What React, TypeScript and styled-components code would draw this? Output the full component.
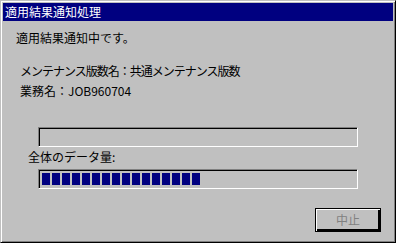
import React from "react";
import styled, { createGlobalStyle } from "styled-components";

const Global = createGlobalStyle`
  html, body { margin: 0; padding: 0; background: #c0c0c0; }
  body { font-family: "Noto Sans CJK JP", "Liberation Sans", sans-serif; }
`;

const Win = styled.div`
  width: 396px;
  height: 243px;
  box-sizing: border-box;
  background: #c0c0c0;
  border: 1px solid;
  border-color: #c0c0c0 #000 #000 #c0c0c0;
  box-shadow: inset 1px 1px #fff, inset -1px -1px #808080;
  padding: 2px;
  display: flex;
  flex-direction: column;
  font-family: "Noto Sans CJK JP", "Liberation Sans", sans-serif;
  font-size: 12px;
  color: #000;
`;

const TitleBar = styled.div`
  height: 18px;
  background: #000080;
  color: #fff;
  font-size: 12px;
  line-height: 18px;
  padding-left: 2px;
  white-space: nowrap;
`;

const Body = styled.div`
  display: flex;
  flex-direction: column;
  flex: 1;
`;

const Line = styled.div<{ $x: number; $top: number; $spacing?: number }>`
  margin-left: ${(p) => p.$x}px;
  margin-top: ${(p) => p.$top}px;
  height: 14px;
  line-height: 14px;
  white-space: nowrap;
  letter-spacing: ${(p) => p.$spacing ?? 0}px;
`;

const Field = styled.div<{ $top: number }>`
  margin-left: 35px;
  margin-top: ${(p) => p.$top}px;
  width: 320px;
  height: 20px;
  box-sizing: border-box;
  border: 1px solid;
  border-color: #808080 #fff #fff #808080;
  box-shadow: inset 1px 1px #000, inset -1px -1px #c0c0c0;
  padding: 3px 3px;
  display: flex;
  gap: 2px;
`;

const Block = styled.div`
  width: 8px;
  height: 12px;
  background: #000080;
`;

const Footer = styled.div`
  display: flex;
  justify-content: flex-end;
  margin-top: 19px;
  padding-right: 12px;
`;

const Button = styled.button`
  width: 66px;
  height: 24px;
  box-sizing: border-box;
  background: #c0c0c0;
  border: 1px solid #000;
  box-shadow: inset 1px 1px #fff, inset -2px -2px #000, inset -1px -1px #808080;
  font-family: "Noto Sans CJK JP", sans-serif;
  font-size: 12px;
  color: #808080;
  padding: 0;
  line-height: 20px;
`;

export default function App() {
  const blocks = Array.from({ length: 16 });
  return (
    <>
      <Global />
      <Win>
        <TitleBar>適用結果通知処理</TitleBar>
        <Body>
          <Line $x={13} $top={10}>適用結果通知中です。</Line>
          <Line $x={17} $top={19} $spacing={-1}>メンテナンス版数名：共通メンテナンス版数</Line>
          <Line $x={17} $top={6}>業務名：JOB960704</Line>
          <Field $top={29} />
          <Line $x={25} $top={3}>全体のデータ量:</Line>
          <Field $top={5}>
            {blocks.map((_, i) => (
              <Block key={i} />
            ))}
          </Field>
          <Footer>
            <Button disabled>中止</Button>
          </Footer>
        </Body>
      </Win>
    </>
  );
}
